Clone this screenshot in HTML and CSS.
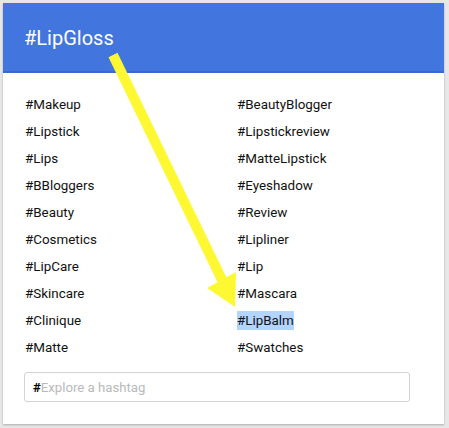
FILE: index.html
```html
<!DOCTYPE html>
<html>
<head>
<meta charset="utf-8">
<link rel="stylesheet" href="styles.css">
</head>
<body>
<div class="card">
  <div class="header">#LipGloss</div>
  <ul class="tags">
    <li>#Makeup</li><li>#BeautyBlogger</li>
    <li>#Lipstick</li><li>#Lipstickreview</li>
    <li>#Lips</li><li>#MatteLipstick</li>
    <li>#BBloggers</li><li>#Eyeshadow</li>
    <li>#Beauty</li><li>#Review</li>
    <li>#Cosmetics</li><li>#Lipliner</li>
    <li>#LipCare</li><li>#Lip</li>
    <li>#Skincare</li><li>#Mascara</li>
    <li>#Clinique</li><li><span class="sel">#LipBalm</span></li>
    <li>#Matte</li><li>#Swatches</li>
  </ul>
  <div class="search"><span class="hash">#</span><span class="ph">Explore a hashtag</span></div>
  <svg class="arrow" width="449" height="428" viewBox="0 0 449 428">
    <line x1="113" y1="55" x2="225" y2="286" stroke="#fdf832" stroke-width="10"/>
    <polygon points="207,288 236,272 235,307" fill="#fdf832"/>
  </svg>
</div>
</body>
</html>
```
FILE: styles.css
```css
html, body { margin: 0; padding: 0; }
body {
  background: #e7e7e7;
  width: 449px;
  height: 428px;
  overflow: hidden;
  font-family: Roboto, "Liberation Sans", sans-serif;
}
.card {
  margin: 3px 0 0 3px;
  width: 441px;
  height: 421px;
  background: #fff;
  box-shadow: 0 1px 2px rgba(0,0,0,0.25);
  display: flex;
  flex-direction: column;
}
.header {
  background: #4375de;
  border-bottom: 2px solid #3a69d3;
  color: #fff;
  font-size: 20px;
  line-height: 70px;
  padding-left: 21px;
  box-sizing: border-box;
  height: 70px;
}
.tags {
  list-style: none;
  margin: 0;
  padding: 18px 0 0 22px;
  display: grid;
  grid-template-columns: 212px 1fr;
  grid-auto-rows: 27px;
}
.tags li {
  font-size: 13.4px;
  line-height: 27px;
  color: #111;
}
.sel { background: #b3d4fc; padding: 2px 0; }
.search {
  margin: 11px 0 0 21px;
  width: 386px;
  height: 30px;
  box-sizing: border-box;
  border: 1px solid #d3d3d3;
  border-radius: 3px;
  padding-left: 8px;
  display: flex;
  align-items: center;
  font-size: 13.2px;
}
.hash { color: #000; font-weight: bold; }
.ph { color: #b9b9b9; }
.arrow { position: absolute; left: 0; top: 0; pointer-events: none; }
```
